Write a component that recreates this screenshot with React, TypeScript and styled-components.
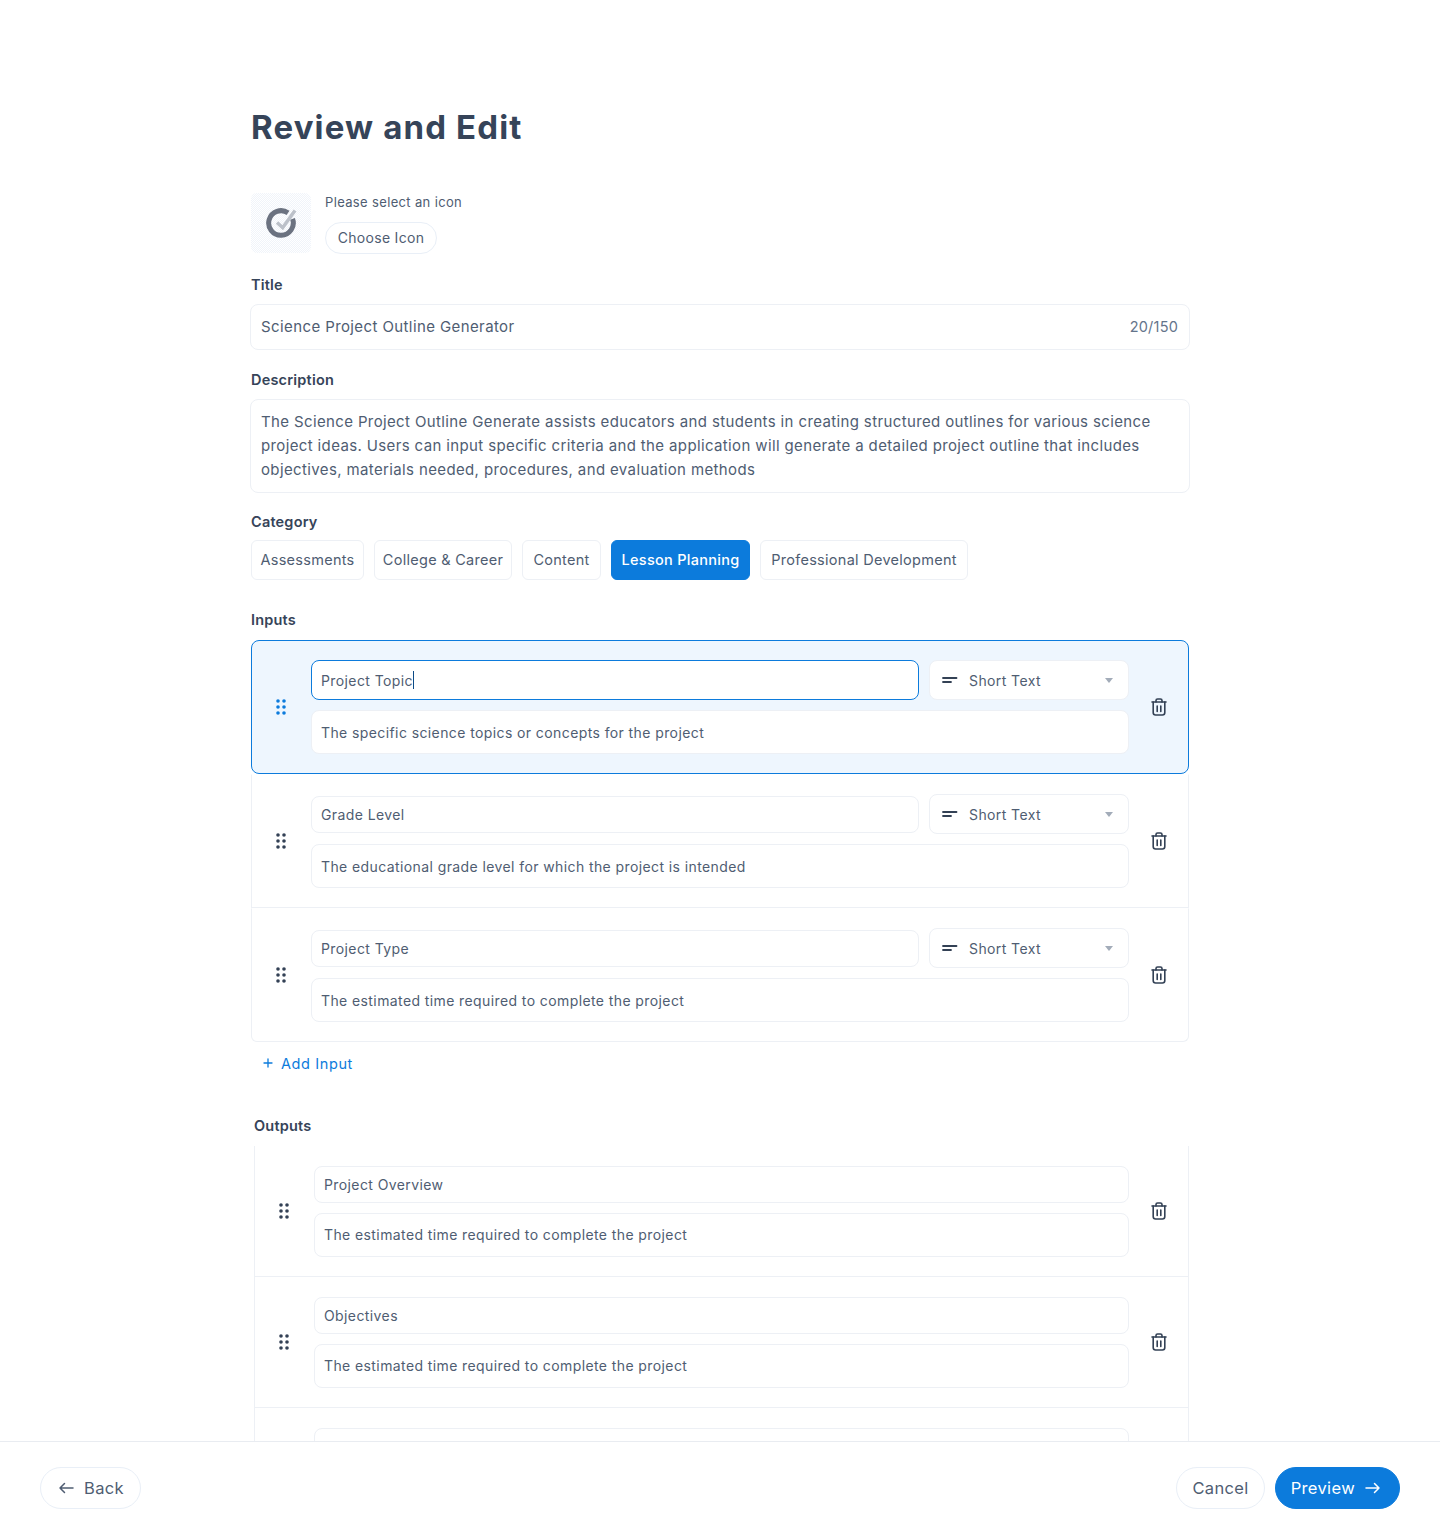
import React from "react";
import styled, { createGlobalStyle } from "styled-components";

const GlobalStyle = createGlobalStyle`
  html, body { margin: 0; padding: 0; background: #fff; }
  body {
    font-family: "Inter", "Liberation Sans", sans-serif;
    color: #334155;
    letter-spacing: 0.2px;
  }
  * { box-sizing: border-box; }
`;

const Page = styled.div`
  height: 1534px;
  display: flex;
  flex-direction: column;
  overflow: hidden;
`;

const Main = styled.main`
  flex: 1;
  min-height: 0;
  overflow: hidden;
`;

const Column = styled.div`
  width: 938px;
  margin: 0 auto;
  padding-top: 106px;
`;

const Heading = styled.h1`
  margin: 0 0 44px;
  font-size: 33px;
  line-height: 43px;
  font-weight: 700;
  letter-spacing: 1.15px;
  color: #364459;
`;

const IconPicker = styled.div`
  display: flex;
  gap: 14px;
  height: 61px;
`;

const IconTile = styled.div`
  width: 60px;
  height: 60px;
  border-radius: 6px;
  display: flex;
  align-items: center;
  justify-content: center;
  background: conic-gradient(#f0f4fa 25%, #fff 0 50%, #f0f4fa 0 75%, #fff 0) 0 0 / 2px 2px;
`;

const PickerBody = styled.div`
  display: flex;
  flex-direction: column;
  align-items: flex-start;
`;

const PickerHint = styled.div`
  font-size: 13px;
  line-height: 18px;
  letter-spacing: 0.35px;
  color: #4f5d72;
`;

const ChooseButton = styled.button`
  margin-top: 11px;
  height: 32px;
  width: 112px;
  padding: 0 0 2px;
  border: 1px solid #e9eff7;
  border-radius: 16px;
  background: #fff;
  font: inherit;
  font-size: 14px;
  letter-spacing: 0.3px;
  color: #4f5d72;
`;

const Label = styled.div<{ $mt: number; $indent?: number }>`
  margin-top: ${(p) => p.$mt}px;
  margin-left: ${(p) => p.$indent ?? 0}px;
  font-size: 14.5px;
  line-height: 20px;
  font-weight: 600;
  color: #364459;
`;

const Field = styled.div`
  margin: 9px -1px 0;
  height: 46px;
  padding: 0 11px 1px 10px;
  border: 1px solid #edf0f5;
  border-radius: 8px;
  display: flex;
  align-items: center;
  justify-content: space-between;
  font-size: 15px;
  letter-spacing: 0.4px;
  color: #4f5d72;
`;

const Counter = styled.span`
  color: #64748b;
  font-size: 14.5px;
  letter-spacing: 0.2px;
`;

const TextArea = styled.div`
  margin: 9px -1px 0;
  height: 94px;
  padding: 10px;
  border: 1px solid #edf0f5;
  border-radius: 8px;
  font-size: 15px;
  line-height: 24px;
  letter-spacing: 0.37px;
  color: #4f5d72;
`;

const Chips = styled.div`
  margin-top: 8px;
  display: flex;
  gap: 10px;
`;

const Chip = styled.div<{ $active?: boolean; $width: number }>`
  width: ${(p) => p.$width}px;
  height: 40px;
  padding-bottom: 1px;
  border-radius: 6px;
  border: 1px solid ${(p) => (p.$active ? "#0c7bdc" : "#edf0f5")};
  background: ${(p) => (p.$active ? "#0c7bdc" : "#fff")};
  color: ${(p) => (p.$active ? "#fff" : "#4f5d72")};
  font-size: 14.5px;
  letter-spacing: 0.28px;
  font-weight: ${(p) => (p.$active ? 500 : 400)};
  white-space: nowrap;
  display: flex;
  align-items: center;
  justify-content: center;
`;

const List = styled.div`
  margin-top: 10px;
`;

const RowBox = styled.div<{ $active?: boolean }>`
  display: flex;
  align-items: center;
  height: 134px;
  border: 1px solid ${(p) => (p.$active ? "#0c7bdc" : "#edf0f5")};
  border-top-color: ${(p) => (p.$active ? "#0c7bdc" : "transparent")};
  border-radius: ${(p) => (p.$active ? "8px" : "0")};
  background: ${(p) => (p.$active ? "#eef6fe" : "#fff")};

  &:last-child {
    border-radius: 0 0 6px 6px;
  }
`;

const Handle = styled.div<{ $active?: boolean }>`
  width: 58px;
  margin-right: 1px;
  display: flex;
  justify-content: center;
  color: ${(p) => (p.$active ? "#0c7bdc" : "#334155")};
`;

const RowFields = styled.div`
  flex: 1;
  min-width: 0;
  display: flex;
  flex-direction: column;
  gap: 10px;
`;

const TopLine = styled.div`
  display: flex;
  align-items: center;
  gap: 10px;
`;

const NameInput = styled.div<{ $active?: boolean }>`
  flex: 1;
  height: ${(p) => (p.$active ? 40 : 37)}px;
  padding: 0 9px;
  background: #fff;
  border: 1px solid ${(p) => (p.$active ? "#0c7bdc" : "#edf0f5")};
  border-radius: 8px;
  display: flex;
  align-items: center;
  font-size: 14px;
  letter-spacing: 0.4px;
  color: #4f5d72;
`;

const TextCaret = styled.span`
  width: 1px;
  height: 18px;
  margin-left: 0;
  background: #0c4a86;
`;

const TypeSelect = styled.div`
  width: 200px;
  height: 40px;
  padding: 0 15px 0 12px;
  background: #fff;
  border: 1px solid #edf0f5;
  border-radius: 8px;
  display: flex;
  align-items: center;
  font-size: 14px;
  letter-spacing: 0.4px;
  color: #4f5d72;
`;

const TypeName = styled.span`
  flex: 1;
  margin-left: 11px;
`;

const SelectArrow = styled.span`
  width: 0;
  height: 0;
  border-left: 4.5px solid transparent;
  border-right: 4.5px solid transparent;
  border-top: 5px solid #a3acb9;
`;

const DescInput = styled.div`
  height: 44px;
  padding: 0 9px;
  background: #fff;
  border: 1px solid #edf0f5;
  border-radius: 8px;
  display: flex;
  align-items: center;
  font-size: 14px;
  letter-spacing: 0.4px;
  color: #4f5d72;
`;

const TrashCell = styled.div`
  width: 59px;
  display: flex;
  justify-content: center;
  color: #334155;
`;

const AddInput = styled.div`
  margin: 11px 0 0 12px;
  display: flex;
  align-items: center;
  gap: 8px;
  height: 20px;
  color: #0c7bdc;
  font-size: 14.5px;
  letter-spacing: 0.6px;
`;

const OutputList = styled.div`
  margin: 10px 0 0 3px;
`;

const OutputRow = styled.div`
  display: flex;
  align-items: center;
  height: 131px;
  border-left: 1px solid #edf0f5;
  border-right: 1px solid #edf0f5;
  border-bottom: 1px solid #edf0f5;
`;

const OutputName = styled(NameInput)`
  flex: none;
`;

const Footer = styled.footer`
  height: 93px;
  padding: 0 40px;
  border-top: 1px solid #e9ecf1;
  display: flex;
  align-items: center;
  justify-content: space-between;
  background: #fff;
`;

const FooterGroup = styled.div`
  display: flex;
  gap: 10px;
`;

const PillButton = styled.button<{ $primary?: boolean }>`
  height: 42px;
  padding: 0 15px;
  border-radius: 21px;
  border: 1px solid ${(p) => (p.$primary ? "#0c7bdc" : "#e9eff7")};
  background: ${(p) => (p.$primary ? "#0c7bdc" : "#fff")};
  color: ${(p) => (p.$primary ? "#fff" : "#4f5d72")};
  font: inherit;
  font-size: 16.5px;
  letter-spacing: 0.35px;
  display: flex;
  align-items: center;
  gap: 10px;
`;

const BackButton = styled(PillButton)`
  padding: 0 16px 0 17px;
`;

const PreviewButton = styled(PillButton)`
  padding: 0 18px 0 15px;
`;

const Grip = () => (
  <svg width="12" height="16" viewBox="0 0 12 16" fill="currentColor">
    {[2, 8, 14].map((y) => (
      <g key={y}>
        <circle cx="3" cy={y} r="1.8" />
        <circle cx="9" cy={y} r="1.8" />
      </g>
    ))}
  </svg>
);

const Trash = () => (
  <svg width="16" height="18" viewBox="0 0 16 18" fill="none" stroke="currentColor" strokeWidth="1.6" strokeLinecap="round" strokeLinejoin="round">
    <path d="M1 4h14" />
    <path d="M5 4V2.6C5 1.7 5.7 1 6.6 1h2.8c.9 0 1.6.7 1.6 1.6V4" />
    <path d="M2.2 4v10.6c0 1.3 1 2.4 2.4 2.4h6.8c1.3 0 2.4-1.1 2.4-2.4V4" />
    <path d="M6.2 8v5.5M9.8 8v5.5" />
  </svg>
);

const ShortTextIcon = () => (
  <svg width="16" height="8" viewBox="0 0 16 8" fill="none" stroke="#334155" strokeWidth="1.8" strokeLinecap="round">
    <path d="M1 2h13.5M1 6h8" />
  </svg>
);

const CheckLogo = () => (
  <svg width="32" height="30" viewBox="0 0 32 30" fill="none">
    <path d="M23.06 4.92A12.3 12.3 0 1 0 27.56 10.8" stroke="#6b7280" strokeWidth="5" />
    <path d="M12 14.5l5.7 5.2L30 2.6" stroke="#bcc1c9" strokeWidth="3.5" />
  </svg>
);

const Arrow = ({ dir }: { dir: "left" | "right" }) => (
  <svg width="16" height="14" viewBox="0 0 16 14" fill="none" stroke="currentColor" strokeWidth="1.5" strokeLinecap="round" strokeLinejoin="round">
    {dir === "left" ? <path d="M15 7H2M6.5 2.5L2 7l4.5 4.5" /> : <path d="M1 7h13M9.5 2.5L14 7l-4.5 4.5" />}
  </svg>
);

const Plus = () => (
  <svg width="10" height="10" viewBox="0 0 10 10" fill="none" stroke="currentColor" strokeWidth="1.3" strokeLinecap="round">
    <path d="M5 1v8M1 5h8" />
  </svg>
);

const categories = [
  { label: "Assessments", width: 113 },
  { label: "College & Career", width: 138 },
  { label: "Content", width: 79 },
  { label: "Lesson Planning", width: 139 },
  { label: "Professional Development", width: 208 },
];

const inputs = [
  { name: "Project Topic", desc: "The specific science topics or concepts for the project", active: true },
  { name: "Grade Level", desc: "The educational grade level for which the project is intended" },
  { name: "Project Type", desc: "The estimated time required to complete the project" },
];

// third row runs under the footer, its text is not visible
const outputs = [
  { id: 1, name: "Project Overview", desc: "The estimated time required to complete the project" },
  { id: 2, name: "Objectives", desc: "The estimated time required to complete the project" },
  { id: 3, name: "", desc: "" },
];

export default function App() {
  return (
    <Page>
      <GlobalStyle />
      <Main>
        <Column>
          <Heading>Review and Edit</Heading>
          <IconPicker>
            <IconTile>
              <CheckLogo />
            </IconTile>
            <PickerBody>
              <PickerHint>Please select an icon</PickerHint>
              <ChooseButton>Choose Icon</ChooseButton>
            </PickerBody>
          </IconPicker>
          <Label $mt={21}>Title</Label>
          <Field>
            <span>Science Project Outline Generator</span>
            <Counter>20/150</Counter>
          </Field>
          <Label $mt={20}>Description</Label>
          <TextArea>
            The Science Project Outline Generate assists educators and students in creating structured outlines for various science project ideas. Users can input specific criteria and the application will generate a detailed project outline that includes objectives, materials needed, procedures, and evaluation methods
          </TextArea>
          <Label $mt={19}>Category</Label>
          <Chips>
            {categories.map((c) => (
              <Chip key={c.label} $width={c.width} $active={c.label === "Lesson Planning"}>
                {c.label}
              </Chip>
            ))}
          </Chips>
          <Label $mt={30}>Inputs</Label>
          <List>
            {inputs.map((row) => (
              <RowBox key={row.name} $active={row.active}>
                <Handle $active={row.active}>
                  <Grip />
                </Handle>
                <RowFields>
                  <TopLine>
                    <NameInput $active={row.active}>
                      {row.name}
                      {row.active && <TextCaret />}
                    </NameInput>
                    <TypeSelect>
                      <ShortTextIcon />
                      <TypeName>Short Text</TypeName>
                      <SelectArrow />
                    </TypeSelect>
                  </TopLine>
                  <DescInput>{row.desc}</DescInput>
                </RowFields>
                <TrashCell>
                  <Trash />
                </TrashCell>
              </RowBox>
            ))}
          </List>
          <AddInput>
            <Plus />
            Add Input
          </AddInput>
          <Label $mt={43} $indent={3}>Outputs</Label>
          <OutputList>
            {outputs.map((row) => (
              <OutputRow key={row.id}>
                <Handle>
                  <Grip />
                </Handle>
                <RowFields>
                  <OutputName>{row.name}</OutputName>
                  <DescInput>{row.desc}</DescInput>
                </RowFields>
                <TrashCell>
                  <Trash />
                </TrashCell>
              </OutputRow>
            ))}
          </OutputList>
        </Column>
      </Main>
      <Footer>
        <BackButton>
          <Arrow dir="left" />
          Back
        </BackButton>
        <FooterGroup>
          <PillButton>Cancel</PillButton>
          <PreviewButton $primary>
            Preview
            <Arrow dir="right" />
          </PreviewButton>
        </FooterGroup>
      </Footer>
    </Page>
  );
}
